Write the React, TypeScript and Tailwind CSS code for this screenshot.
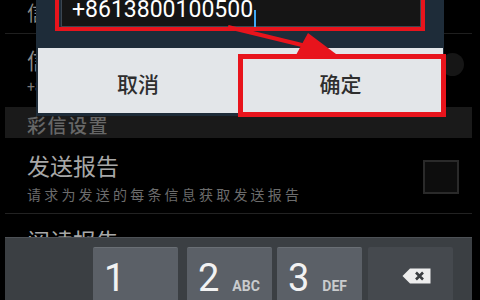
import React from "react";

const cjk = { fontFamily: '"Noto Sans CJK SC", "Noto Sans", sans-serif' };
const rob = { fontFamily: 'Roboto, "Liberation Sans", sans-serif' };

function Key({ d, l, dark }: { d?: string; l?: string; dark?: boolean }) {
  return (
    <div
      className={`w-[85px] h-[60px] rounded-[2px] flex items-baseline pl-[11px] pt-[11px] ${
        dark ? "bg-[#45494e] justify-center items-start pl-0 pt-[21px]" : "bg-[#5b6067] border-t border-[#6a6f75]"
      }`}
    >
      {d && (
        <span className="text-[38px] leading-[38px] text-[#f2f2f2]" style={rob}>
          {d}
        </span>
      )}
      {l && (
        <span className="ml-[13px] text-[14px] leading-[14px] font-bold text-[#c9cbcd]" style={rob}>
          {l}
        </span>
      )}
      {dark && (
        <svg width="29" height="16" viewBox="0 0 29 16">
          <path d="M8 0.5 H28.5 V15.5 H8 L0.5 8 Z" fill="#ededed" />
          <path d="M14 4.5 L21 11.5 M21 4.5 L14 11.5" stroke="#3a3d40" strokeWidth="2.6" />
        </svg>
      )}
    </div>
  );
}

export default function App() {
  return (
    <div className="relative w-[480px] h-[300px] bg-black overflow-hidden flex" style={cjk}>
      <div className="ml-[5px] w-[467px] h-full flex flex-col">
        <div className="h-[237px] shrink-0 overflow-hidden flex flex-col">
          <div className="h-[33px] shrink-0 pl-[22px] pt-[3px] text-[20px] leading-[20px] text-[#8a8a8a]">信息设置</div>
          <div className="h-px shrink-0 bg-[#1f1f1f]" />
          <div className="h-[73px] shrink-0 flex items-start justify-between">
            <div className="pl-[22px] pt-[14px] flex flex-col">
              <span className="text-[22px] leading-[22px] text-[#8a8a8a]">信息中心</span>
              <span className="mt-[10px] text-[14px] leading-[14px] text-[#7a7a7a]" style={rob}>
                +8613800100500
              </span>
            </div>
            <div className="mt-[19px] mr-[8px] w-[23px] h-[23px] rounded-full bg-[#161616]" />
          </div>
          <div className="h-[31px] shrink-0 bg-[#1a1a1a] pl-[22px] pt-[4px] flex items-center text-[19px] leading-[19px] tracking-[1.5px] text-[#676767] font-medium">
            彩信设置
          </div>
          <div className="h-[75px] shrink-0 flex items-start justify-between">
            <div className="pl-[22px] pt-[16px] flex flex-col">
              <span className="text-[23px] leading-[23px] text-[#a8a8a8]">发送报告</span>
              <span className="mt-[10px] text-[14px] leading-[14px] tracking-[3.2px] text-[#6c6c6c]">
                请求为发送的每条信息获取发送报告
              </span>
            </div>
            <div className="mt-[22px] mr-[13px] w-[36px] h-[34px] border-2 border-[#2a2a2a] bg-[#0d0d0d]" />
          </div>
          <div className="h-px shrink-0 bg-[#222222]" />
          <div className="shrink-0 pl-[22px] pt-[15px] text-[23px] leading-[23px] text-[#a8a8a8]">阅读报告</div>
        </div>
        <div className="h-[63px] shrink-0 bg-[#3b3f43] border-t border-[#4d5156] flex items-start pt-[9px]">
          <div className="ml-[88px]">
            <Key d="1" />
          </div>
          <div className="ml-[9px]">
            <Key d="2" l="ABC" />
          </div>
          <div className="ml-[5px]">
            <Key d="3" l="DEF" />
          </div>
          <div className="ml-[6px]">
            <Key dark />
          </div>
        </div>
      </div>

      {/* dialog */}
      <div className="absolute left-[36px] top-[-14px] w-[408px] h-[130px] bg-[#1e2c39] flex flex-col">
        <div className="mt-[1px] ml-[25px] mr-[23px] h-[40px] bg-[#151515] border border-[#3c4650] pl-[10px] pt-[10px] flex items-start">
          <span className="text-[23px] leading-[23px] text-white" style={rob}>
            +8613800100500
          </span>
          <span className="ml-[1px] mt-[12px] w-[2px] h-[18px] bg-[#3fa9f5]" />
        </div>
        <div className="mt-[21px] ml-[2px] mr-[1px] h-[65px] flex">
          <div className="w-[200px] h-full bg-[#e3e6e9] flex items-center justify-center pt-[5px] text-[21px] leading-[21px] font-medium text-[#2e2e2e]">
            取消
          </div>
          <div className="flex-1 h-full bg-[#e3e6e9] flex items-center justify-center pt-[5px] text-[21px] leading-[21px] font-medium text-[#2e2e2e]">
            确定
          </div>
        </div>
        <div className="absolute left-[19px] top-0 w-[370px] h-[45px] border-4 border-[#e8141c]" />
        <div className="absolute left-[202px] top-[68px] w-[208px] h-[63px] border-[5px] border-[#e8141c]" />
      </div>

      {/* arrow */}
      <svg className="absolute left-0 top-0 pointer-events-none" width="480" height="300">
        <line x1="228" y1="27" x2="306" y2="46" stroke="#e8141c" strokeWidth="4" />
        <polygon points="340,57 296,55 308,33" fill="#e8141c" />
      </svg>
    </div>
  );
}
